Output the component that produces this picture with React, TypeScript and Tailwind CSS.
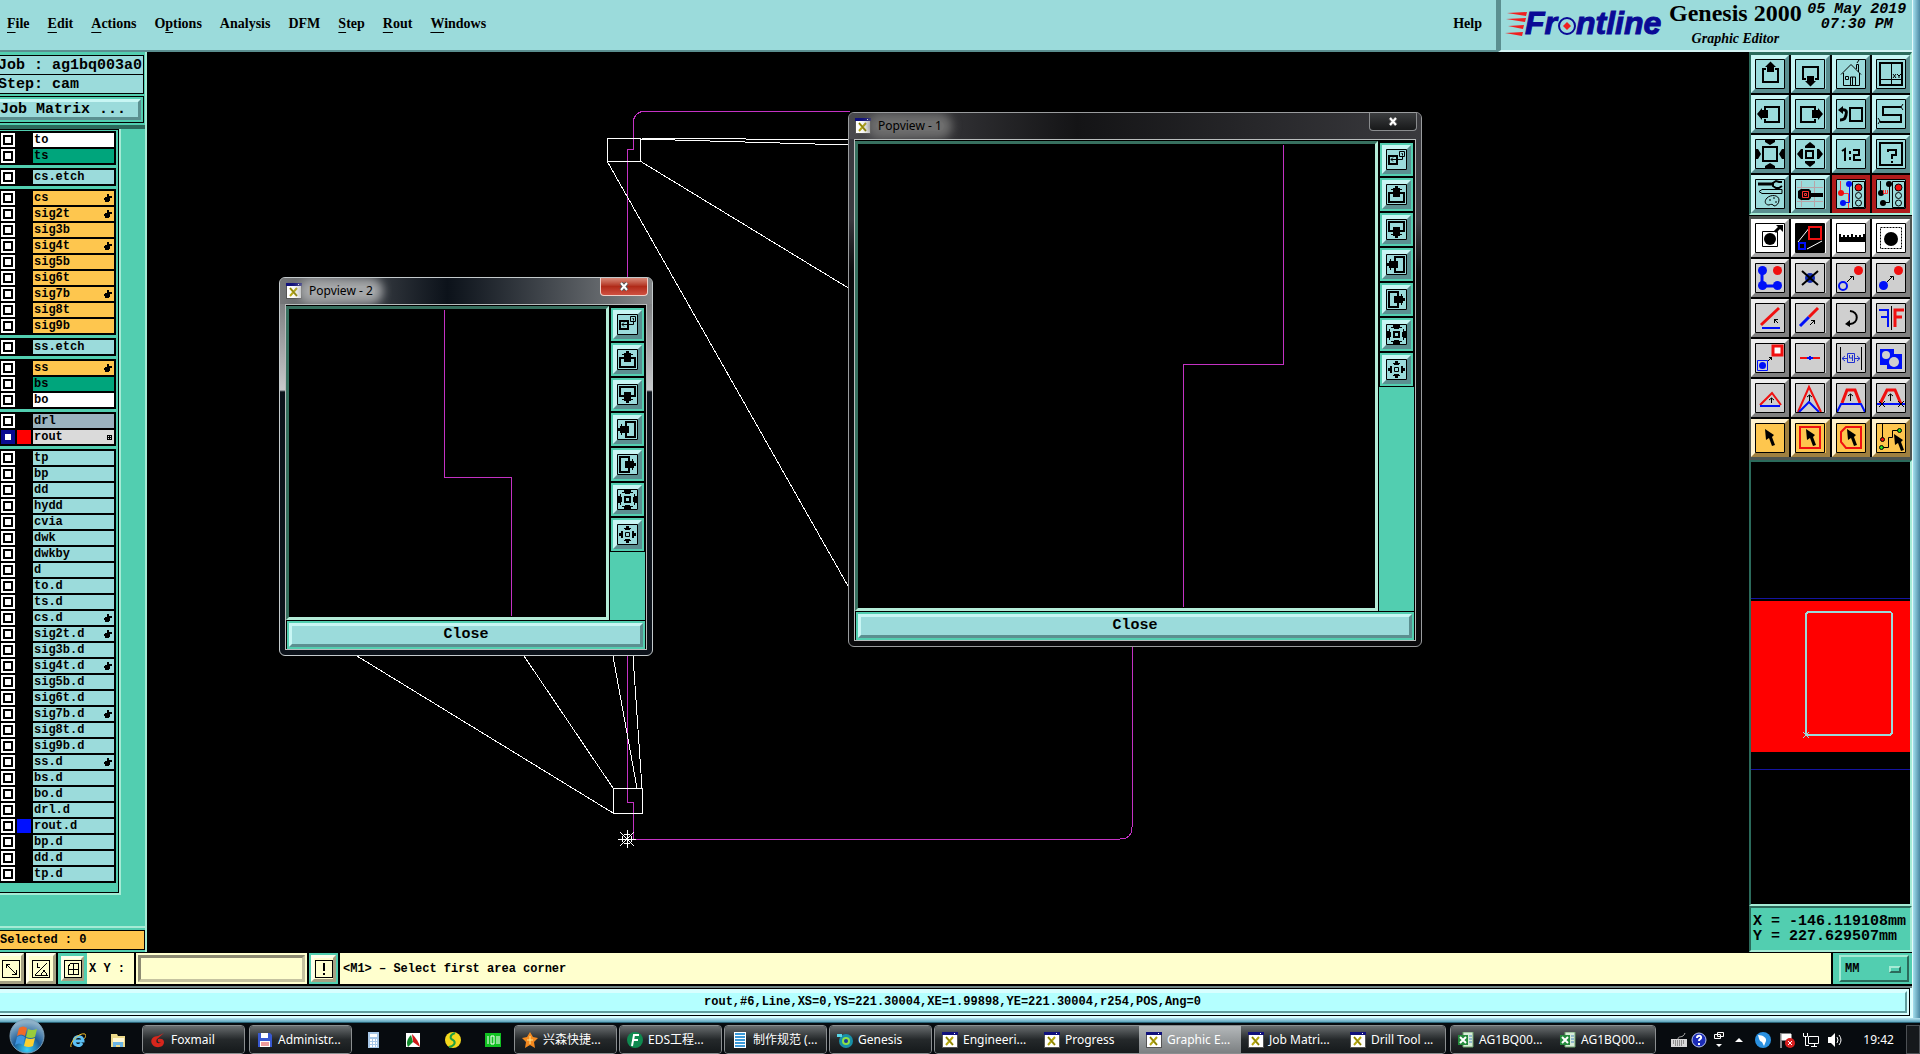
// App.tsx
// Genesis 2000 graphic editor: menu bar, layer list, drawing area with popviews,
// tool palettes, status rows and the desktop taskbar.

import type { ReactNode } from "react";
import clsx from "clsx";

const BLUE = "#0010f8";
const RED = "#f01010";

// ---------- bevels ----------

const BEVEL_AQUA =
  "border-[3px] border-t-[#c8f6f4] border-l-[#c8f6f4] border-r-[#5b8f90] border-b-[#5b8f90] bg-[#9bdbdb]";

// ---------- layer list ----------

interface Layer {
  name: string;
  fill: string;
  hand?: boolean;
  grid?: boolean;
  swatch?: string;
  active?: boolean;
}

const AQUA = "bg-[#9bdbdb]";
const ORANGE = "bg-[#fec64e]";
const GREEN = "bg-[#00a57c]";

const board = (names: string[], fill: string, hands: string[]): Layer[] =>
  names.map((name) => ({ name, fill, hand: hands.includes(name) }));

const layerGroups: Layer[][] = [
  [
    { name: "to", fill: "bg-white" },
    { name: "ts", fill: GREEN },
  ],
  [{ name: "cs.etch", fill: AQUA }],
  board(
    ["cs", "sig2t", "sig3b", "sig4t", "sig5b", "sig6t", "sig7b", "sig8t", "sig9b"],
    ORANGE,
    ["cs", "sig2t", "sig4t", "sig7b"]
  ),
  [{ name: "ss.etch", fill: AQUA }],
  [
    { name: "ss", fill: ORANGE, hand: true },
    { name: "bs", fill: GREEN },
    { name: "bo", fill: "bg-white" },
  ],
  [
    { name: "drl", fill: "bg-[#9bb3bf]" },
    { name: "rout", fill: "bg-[#dadada]", grid: true, swatch: "bg-[#ff0000]", active: true },
  ],
  [
    ...board(
      [
        "tp", "bp", "dd", "hydd", "cvia", "dwk", "dwkby", "d", "to.d", "ts.d", "cs.d", "sig2t.d",
        "sig3b.d", "sig4t.d", "sig5b.d", "sig6t.d", "sig7b.d", "sig8t.d", "sig9b.d", "ss.d",
        "bs.d", "bo.d", "drl.d",
      ],
      AQUA,
      ["cs.d", "sig2t.d", "sig4t.d", "sig7b.d", "ss.d"]
    ),
    { name: "rout.d", fill: AQUA, swatch: "bg-[#0010ff]" },
    ...board(["bp.d", "dd.d", "tp.d"], AQUA, []),
  ],
];

function LayerRow({ layer }: { layer: Layer }) {
  const id = `layer-${layer.name}`;
  return (
    <div className="flex h-[14px] gap-[2px]">
      <input
        id={id}
        type="checkbox"
        defaultChecked={layer.active}
        className={clsx(
          "size-[14px] shrink-0 appearance-none border-2 bg-white",
          layer.active
            ? "border-[#0a0a90] shadow-[inset_0_0_0_2px_#0a0a90]"
            : "border-white shadow-[inset_0_0_0_2px_black]"
        )}
      />
      <span className={clsx("w-[14px] shrink-0", layer.swatch)} />
      <label
        htmlFor={id}
        className={clsx("flex flex-1 items-center justify-between pr-[2px] pl-px text-xs leading-[14px]", layer.fill)}
      >
        {layer.name}
        {layer.hand && (
          <svg width="8" height="8" viewBox="0 0 8 8" shapeRendering="crispEdges">
            <path d="M3 0h2v2h3v2H6v3H5v1H1V6H0V4h1V3h2z" />
          </svg>
        )}
        {layer.grid && (
          <svg width="5" height="5" viewBox="0 0 5 5" shapeRendering="crispEdges">
            <path d="M0 0h5v5H0zM1 1v1h1V1zM3 1v1h1V1zM1 3v1h1V3zM3 3v1h1V3z" fillRule="evenodd" />
          </svg>
        )}
      </label>
    </div>
  );
}

function LayerPanel() {
  return (
    <aside className="flex w-[147px] shrink-0 flex-col border-r-2 border-[#a5ebd5] bg-[#52ceb0] font-bold">
      <div className="border-b-4 border-[#2b6a5b] pt-[3px]">
        <div className="mr-px border border-l-0 border-black bg-[#9bdbdb] text-[15px] leading-5 whitespace-nowrap">
          <div className="h-[18px]">
            <span className="-ml-[2px]">Job : ag1bq003a0</span>
          </div>
          <div className="h-[19px] border-t border-black">
            <span className="-ml-[2px]">Step: cam</span>
          </div>
        </div>
        <div className="mt-[2px] mr-px mb-[2px] border border-l-0 border-black p-[2px] pl-0">
          <button className={clsx(BEVEL_AQUA, "block h-[21px] w-full border-l-0 text-left text-[15px] leading-[15px]")}>
            Job Matrix ...
          </button>
        </div>
      </div>
      <div className="flex flex-1 flex-col items-start">
        <div className="w-[121px] border-r-2 border-b-2 border-[#a5ebd5]">
          <div className="flex flex-col gap-[3px] border-t border-r border-b border-black pt-px pr-[2px] pb-[9px]">
            {layerGroups.map((group, i) => (
              <div key={i} className="flex flex-col gap-[2px] bg-black py-[2px] pr-[2px] pl-px">
                {group.map((layer) => (
                  <LayerRow key={layer.name} layer={layer} />
                ))}
              </div>
            ))}
          </div>
        </div>
      </div>
      <div className="border-t-2 border-[#a5ebd5] pt-[2px] pb-[2px]">
        <div className="h-5 border border-l-0 border-black bg-[#fec64e] text-xs leading-[18px]">
          <span>Selected : 0</span>
        </div>
      </div>
    </aside>
  );
}

// ---------- tool icons, drawn on a 38px button grid ----------

const signalLight = (
  <>
    <path d="M20.5 6.5h12v26h-12z" fill="none" stroke="#000" />
    <circle cx="26.5" cy="12.5" r="3.5" fill={RED} stroke="#000" />
    <circle cx="26.5" cy="20.5" r="3" fill="none" stroke="#000" />
    <circle cx="26.5" cy="28" r="3" fill="none" stroke="#000" />
  </>
);

const icons: Record<string, ReactNode> = {
  panUp: (
    <>
      <path d="M15 14h-3v13h15V14h-3" fill="none" stroke="#000" strokeWidth="2" />
      <path d="M19.5 6.500l5.500 5.500h-2v5h-7v-5h-2z" />
    </>
  ),
  panDown: (
    <>
      <path d="M15 24h-3V12h15v12h-3" fill="none" stroke="#000" strokeWidth="2" />
      <path d="M19.5 31.500l5.500-5.500h-2v-5h-7v5h-2z" />
    </>
  ),
  home: (
    <path
      d="M9 19.5L19 9.500l10 10M11.500 18v12.500h16V18M18.500 30v-8h5v8M20.500 22v8M13.500 21.500h3v3h-3zM24.500 14V9.500h2V17M25 8l2-3"
      fill="none"
      stroke="#000"
    />
  ),
  split: (
    <>
      <path d="M8 8h22v22H8z" fill="none" stroke="#000" strokeWidth="2" />
      <path d="M19.500 8v22M8 24.500h22" stroke="#000" />
      <path d="M21 19l3 4M24 19l-3 4M25 19l2 2 2-2M27 21v2" stroke="#000" fill="none" />
    </>
  ),
  panLeft: (
    <>
      <path d="M14 15v-3h14v15H14v-3" fill="none" stroke="#000" strokeWidth="2" />
      <path d="M6 19l5-6v2h6v8h-6v2z" />
    </>
  ),
  panRight: (
    <>
      <path d="M24 15v-3H10v15h14v-3" fill="none" stroke="#000" strokeWidth="2" />
      <path d="M32 19l-5-6v2h-6v8h6v2z" />
    </>
  ),
  previous: (
    <>
      <path d="M18 13h12v13H18z" fill="none" stroke="#000" strokeWidth="2" />
      <path d="M9 15c6-1 6 2 5 5s-1 5-6 5" fill="none" stroke="#000" strokeWidth="3" />
      <path d="M6 15l5-4v8z" />
    </>
  ),
  serpentine: (
    <>
      <path d="M29 12H11v8h18v7H8" fill="none" stroke="#000" strokeWidth="2" />
      <path d="M31 9l-2 3 2 3M6 23l2 3-2 3" fill="none" stroke="#000" />
    </>
  ),
  zoomIn: (
    <>
      <path d="M12 12h14v14H12z" fill="none" stroke="#000" strokeWidth="2" />
      <path d="M14 5h10v2l-5 3-5-3zM14 33h10v-2l-5-3-5 3zM5 14v10h2l3-5-3-5zM33 14v10h-2l-3-5 3-5z" />
    </>
  ),
  zoomOut: (
    <>
      <path d="M15 16h7v7h-7z" fill="none" stroke="#000" strokeWidth="2" />
      <path d="M14 13h10v-2l-5-4-5 4zM14 26h10v2l-5 4-5-4zM12 14v10h-2l-4-5 4-5zM26 14v10h2l4-5-4-5z" />
    </>
  ),
  ratio: (
    <path
      d="M10 16l3-2v12M18 16v3M18 22v3M21 15h6v5h-5v5h7"
      fill="none"
      stroke="#000"
      strokeWidth="2"
    />
  ),
  help: (
    <>
      <path d="M8 8h22v22H8z" fill="none" stroke="#000" strokeWidth="2" />
      <path d="M16 17v-2h8v5h-4v4M20 26v2" fill="none" stroke="#000" strokeWidth="2" />
    </>
  ),
  tools: (
    <>
      <path d="M7 9h16" stroke="#000" strokeWidth="3" />
      <path d="M31 7h-3l-3-1-3 2v3l3 2h3l3-2" fill="none" stroke="#000" strokeWidth="2" />
      <path d="M8 16.500l3-2h20v4H11z" fill="none" stroke="#000" />
      <path d="M16 23c4-4 12-3 12 2 0 4-3 6-5 6-1-2-3-2-5-1-4 0-5-4-2-7z" fill="none" stroke="#000" />
      <path d="M18 25h2M22 23h2M24 27h2" stroke="#000" />
    </>
  ),
  probe: (
    <>
      <path d="M6 12.500h26M6 26.500h26M10.500 6v26M23.500 6v26" stroke="#b9a4a8" />
      <path d="M10 14h8l2 2v7l-2 2h-8l-3-2v-7z" />
      <path d="M20 20h12" stroke="#000" strokeWidth="4" />
      <path d="M11.500 16.500h6v6h-6zM13.500 18.500h2v2h-2z" fill="none" stroke="#f33" />
    </>
  ),
  signalColor: (
    <>
      <path d="M8.500 6v12M9 18.500h7.500V33" fill="none" stroke="#f33" />
      <path d="M17.500 8v19.500H11" fill="none" stroke={BLUE} />
      <circle cx="9" cy="18" r="3" fill={RED} />
      <circle cx="17" cy="9" r="3" fill={BLUE} />
      <circle cx="11" cy="28" r="3" fill={BLUE} />
      {signalLight}
    </>
  ),
  signalMono: (
    <>
      <path d="M8.500 6v12M17.500 9v18.500H11" fill="none" stroke="#000" />
      <circle cx="9" cy="18" r="3" />
      <circle cx="17" cy="9" r="3" />
      <circle cx="11" cy="28" r="3" />
      <path d="M11.500 15v3.500h4V15M13.500 15v4" fill="none" stroke="#f33" />
      {signalLight}
    </>
  ),
  padOut: (
    <>
      <path d="M11.500 12.500h15v15h-15z" fill="none" stroke="#000" />
      <circle cx="19" cy="20" r="6" />
      <path d="M24 13l6-6" stroke="#000" strokeWidth="3" />
      <path d="M25 6h7v7z" />
    </>
  ),
  popview: (
    <>
      <path d="M5 5h28v28H5z" />
      <path d="M7 23L19 8M16 30l15-8" stroke="#fff" />
      <path d="M18 8h12v12H18z" fill="none" stroke={RED} strokeWidth="2" />
      <path d="M8 24h6v6H8z" fill="none" stroke={BLUE} strokeWidth="2" />
    </>
  ),
  ruler: (
    <path d="M7 23V15h2v3h2v-2h2v2h2v-2h2v2h2v-3h2v3h2v-2h2v2h2v-2h2v2h2v-3h2v8z" />
  ),
  select: (
    <>
      <path d="M8.500 8.500h21v21h-21z" fill="none" stroke="#000" strokeDasharray="2 1" />
      <circle cx="19" cy="20" r="7" />
    </>
  ),
  chain: (
    <>
      <path d="M11 12v15h15" fill="none" stroke={BLUE} strokeWidth="3" />
      <circle cx="11.5" cy="11.5" r="4.5" fill={BLUE} />
      <circle cx="11.5" cy="26.5" r="4.5" fill={BLUE} />
      <circle cx="26.5" cy="26.5" r="4.5" fill={BLUE} />
      <circle cx="26.5" cy="11.5" r="4.5" fill={RED} />
    </>
  ),
  erase: (
    <>
      <circle cx="19" cy="19" r="5" fill="#1028b0" />
      <path d="M11 12l16 14M27 12L11 26" stroke="#000" strokeWidth="2" />
    </>
  ),
  moveOpen: (
    <>
      <circle cx="11" cy="27" r="4" fill="none" stroke={BLUE} strokeWidth="2" />
      <path d="M15 23l6-6M18 17.500h3.500V21" fill="none" stroke="#000" />
      <circle cx="26.5" cy="11.5" r="4.5" fill={RED} />
    </>
  ),
  moveSolid: (
    <>
      <circle cx="11.5" cy="26.5" r="4.5" fill={BLUE} />
      <path d="M15 23l6-6M18 17.500h3.500V21" fill="none" stroke="#000" />
      <circle cx="26.5" cy="11.5" r="4.5" fill={RED} />
    </>
  ),
  angle: (
    <>
      <path d="M10 26L28 9" stroke={RED} strokeWidth="3" />
      <path d="M11 29h18" stroke={BLUE} strokeWidth="2" />
      <path d="M27 24l-4-4M23.500 24v-3.500H27" fill="none" stroke="#000" />
    </>
  ),
  stretch: (
    <>
      <path d="M9 27l9-9" stroke={BLUE} strokeWidth="3" />
      <path d="M18 18l9-9" stroke={RED} strokeWidth="3" />
      <path d="M19 26l5-5M20 21.500h3.500V25" fill="none" stroke="#000" />
    </>
  ),
  rotate: (
    <>
      <path d="M18 12c9 1 9 12 0 13h-3" fill="none" stroke="#000" strokeWidth="2" />
      <path d="M13 25l5-4v7z" />
    </>
  ),
  mirror: (
    <>
      <path d="M19.500 7v24" stroke="#000" />
      <path d="M7 11h9v17M16 18H9" fill="none" stroke={BLUE} strokeWidth="2" />
      <path d="M32 11h-9v17M23 18h7" fill="none" stroke={RED} strokeWidth="3" />
    </>
  ),
  scalePad: (
    <>
      <path d="M22 7h9v9h-9z" fill="#fff" stroke={RED} strokeWidth="3" />
      <path d="M6.500 21.500h10v10h-10z" fill="none" stroke={BLUE} />
      <circle cx="11.5" cy="26.5" r="3.5" fill={BLUE} />
      <path d="M17 22l4-4M18 18.500h2.500V21" fill="none" stroke="#000" />
    </>
  ),
  breakLine: (
    <>
      <path d="M9 19h20" stroke={RED} strokeWidth="2" />
      <path d="M16 19h6" stroke={BLUE} strokeWidth="2" />
      <path d="M18 17h2v4h-2z" fill={BLUE} />
    </>
  ),
  spacing: (
    <>
      <path d="M8.500 8v23M29.500 8v23" stroke="#000" />
      <path d="M10 19.500h5M13 17l-3 2.500 3 2.500M23 19.500h5M25 17l3 2.500-3 2.500M15.500 14.500h7v9h-7zM17.500 16v3h3M20.500 16v6" fill="none" stroke="#2030d0" />
    </>
  ),
  merge: (
    <>
      <path d="M8 10h14v5h8v15H15v-4H8z" fill={BLUE} />
      <circle cx="14" cy="16" r="4" fill="#cfcfcf" />
      <circle cx="22" cy="23" r="5" fill="#cfcfcf" />
    </>
  ),
  triFlat: (
    <>
      <path d="M9 26l12-12 9 12" fill="none" stroke={RED} strokeWidth="2" />
      <path d="M9 27h20" stroke={BLUE} strokeWidth="2" />
      <path d="M20.500 24v-5M18 21l2.500-2 2.500 2" fill="none" stroke="#000" />
    </>
  ),
  triTall: (
    <>
      <path d="M7 33L18 8l12 25" fill="none" stroke={RED} strokeWidth="2" />
      <path d="M8 33l10-10 10 10" fill="none" stroke={BLUE} strokeWidth="2" />
      <path d="M18.500 22v-6M16 18l2.500-2 2.500 2" fill="none" stroke="#000" />
    </>
  ),
  arcTop: (
    <>
      <path d="M10 24l5-13h8l5 13" fill="none" stroke={RED} strokeWidth="3" />
      <path d="M5 33l4-8h20l4 8" fill="none" stroke={BLUE} strokeWidth="2" />
      <path d="M18.500 22v-7M16 17l2.500-2 2.500 2" fill="none" stroke="#000" />
    </>
  ),
  arcCut: (
    <>
      <path d="M8 25l7-14h8l6 14" fill="none" stroke={RED} strokeWidth="3" />
      <path d="M5 25h28" stroke={BLUE} strokeWidth="2" />
      <path d="M18.500 22v-7M16 17l2.500-2 2.500 2M7 22l6 6M13 22l-6 6M26 22l6 6M32 22l-6 6" fill="none" stroke="#000" />
    </>
  ),
  pointer: <path d="M14 10l9 6-2 2 3 8-3 1-3-8-3 2z" />,
  pointerBox: (
    <>
      <path d="M9 8h20v21H9z" fill="none" stroke={RED} strokeWidth="2" />
      <path d="M15 10l9 6-2 2 3 8-3 1-3-8-3 2z" />
    </>
  ),
  pointerPoly: (
    <>
      <path d="M14 8h15v21H14l-5-6V13z" fill="none" stroke={RED} strokeWidth="2" />
      <path d="M15 10l9 6-2 2 3 8-3 1-3-8-3 2z" />
    </>
  ),
  pointerNet: (
    <>
      <path d="M10.500 5v15M10 28.500h6.500v-10h4v-7H27" fill="none" stroke="#000" />
      <circle cx="10.5" cy="20.5" r="2" fill={RED} stroke="#000" />
      <circle cx="9.5" cy="28.5" r="2" fill="#20e020" stroke="#000" />
      <circle cx="27.5" cy="11.5" r="2" fill="#20e020" stroke="#000" />
      <path d="M22 15l9 6-2 2 3 8-3 1-3-8-3 2z" />
    </>
  ),
};

function ToolIcon({ name }: { name: string }) {
  return (
    <svg className="block size-[30px] shrink-0" viewBox="4 4 30 30" aria-hidden="true">
      {icons[name]}
      <path d="M4.5 4.5h29v29h-29z" fill="none" stroke="#000" />
    </svg>
  );
}

const viewTools = [
  "panUp", "panDown", "home", "split",
  "panLeft", "panRight", "previous", "serpentine",
  "zoomIn", "zoomOut", "ratio", "help",
  "tools", "probe", "signalColor", "signalMono",
];

const editTools = [
  "padOut", "popview", "ruler", "select",
  "chain", "erase", "moveOpen", "moveSolid",
  "angle", "stretch", "rotate", "mirror",
  "scalePad", "breakLine", "spacing", "merge",
  "triFlat", "triTall", "arcTop", "arcCut",
  "pointer", "pointerBox", "pointerPoly", "pointerNet",
];

const SKIN_AQUA = "border-t-[#c8f6f4] border-l-[#c8f6f4] border-r-[#5b8f90] border-b-[#5b8f90] bg-[#9bdbdb]";
const SKIN_RED = "border-[#b01c1c] bg-[#9bdbdb]";
const SKIN_WHITE = "border-t-white border-l-white border-r-[#a5a5a5] border-b-[#a5a5a5] bg-white";
const SKIN_GREY = "border-t-[#eeeeee] border-l-[#eeeeee] border-r-[#808080] border-b-[#808080] bg-[#cfcfcf]";
const SKIN_ORANGE = "border-t-[#fff2cf] border-l-[#fff2cf] border-r-[#a08040] border-b-[#a08040] bg-[#fec64e]";

function editSkin(index: number) {
  if (index < 4) return SKIN_WHITE;
  return index < 20 ? SKIN_GREY : SKIN_ORANGE;
}

function Palette({ tools, skin, className }: { tools: string[]; skin: (i: number) => string; className?: string }) {
  return (
    <div className={clsx("grid grid-cols-4 gap-[2px] border-2 border-t-[3px] bg-black", className)}>
      {tools.map((name, i) => (
        <button
          key={name}
          aria-label={name}
          className={clsx("flex h-[38px] items-center justify-center border-4", skin(i))}
        >
          <ToolIcon name={name} />
        </button>
      ))}
    </div>
  );
}

function ToolPanel() {
  return (
    <aside className="flex w-[163px] shrink-0 flex-col bg-black">
      <Palette
        tools={viewTools}
        skin={(i) => (i >= 14 ? SKIN_RED : SKIN_AQUA)}
        className="border-[#2b6a5b] border-r-[#a5ebd5] border-b-[#a5ebd5]"
      />
      <Palette tools={editTools} skin={editSkin} className="mt-px border-[#4e5450] border-b-[3px]" />
      <div className="flex flex-1 flex-col border-2 border-t-[#2b6a5b] border-r-[#a5ebd5] border-b-[#a5ebd5] border-l-[#2b6a5b]">
        <svg className="block h-[440px] w-full" viewBox="0 0 159 440" preserveAspectRatio="none" shapeRendering="crispEdges">
          <path d="M0 136h159M0 307h159" stroke="#1414a0" />
          <path d="M0 139h159v151H0z" fill="#ff0000" />
          <rect x="55" y="150" width="86" height="123" rx="3" fill="none" stroke="#9bdbdb" strokeWidth="2" />
          <path d="M52 270l6 6M58 270l-6 6" stroke="#9bdbdb" />
        </svg>
      </div>
      <div className="border-2 border-t-[#2b6a5b] border-r-[#a5ebd5] border-b-[#a5ebd5] border-l-[#2b6a5b] bg-[#52ceb0] py-[6px] pl-[2px] text-[15px] leading-[15px] font-bold whitespace-pre">
        <div>X = -146.119108mm</div>
        <div>Y = 227.629507mm</div>
      </div>
    </aside>
  );
}

// ---------- popview windows ----------

function XIcon({ className }: { className?: string }) {
  return (
    <svg className={clsx("shrink-0", className)} width="16" height="16" viewBox="0 0 16 16" aria-hidden="true">
      <path d="M0 0h16v16H0z" fill="#555" />
      <path d="M1 1h14v14H1z" fill="#fff" />
      <path d="M0 0h16v3H0z" fill="#10107c" />
      <path d="M12 1h1v1h-1z" fill="#fff" />
      <path d="M4 5l7 8M11 5l-7 8" stroke="#b5a812" strokeWidth="2" />
      <path d="M4 5l7 8" stroke="#77700c" strokeWidth="1" />
    </svg>
  );
}

// side column icons, 21px grid
const popviewIcons: Record<string, ReactNode> = {
  Dock: (
    <>
      <path d="M3 7h8v8H3z" fill="none" stroke="#000" strokeWidth="2" />
      <path d="M5 10.500h11.500v-3M7 8.500l-2 2 2 2M13.500 2.500h5v5h-5zM15.500 4.500h1v2" fill="none" stroke="#000" />
    </>
  ),
  Up: (
    <>
      <path d="M7 9H3v9h15V9h-4" fill="none" stroke="#000" strokeWidth="2" />
      <path d="M9 2h3v2h2v1h2v1h-2v7H7V6H5V5h2V4h2z" />
    </>
  ),
  Down: (
    <>
      <path d="M7 12H3V3h15v9h-4" fill="none" stroke="#000" strokeWidth="2" />
      <path d="M9 19h3v-2h2v-1h2v-1h-2V8H7v7H5v1h2v1h2z" />
    </>
  ),
  Left: (
    <>
      <path d="M9 7V3h9v15H9v-4" fill="none" stroke="#000" strokeWidth="2" />
      <path d="M1 9v3h2v2h1v2h1v-2h7V7H5V5H4v2H3v2z" />
    </>
  ),
  Right: (
    <>
      <path d="M12 7V3H3v15h9v-4" fill="none" stroke="#000" strokeWidth="2" />
      <path d="M19 9v3h-2v2h-1v2h-1v-2H8V7h7V5h1v2h1v2z" />
    </>
  ),
  "Zoom in": (
    <>
      <path d="M8 8h5v5H8z" fill="none" stroke="#000" strokeWidth="2" />
      <path d="M7 1h7v2h2v1h-3v1H8V4H5V3h2zM7 20h7v-2h2v-1h-3v-1H8v1H5v1h2zM1 7v7h2v2h1v-3h1V8H4V5H3v2zM20 7v7h-2v2h-1v-3h-1V8h1V5h1v2z" />
    </>
  ),
  "Zoom out": (
    <>
      <path d="M8.5 8.500h4v4h-4z" fill="none" stroke="#000" />
      <path d="M9 2h3v2h2v1h-1v1H8V5H7V4h2zM9 19h3v-2h2v-1h-1v-1H8v1H7v1h2zM2 9v3h2v2h2V7H4v2zM19 9v3h-2v2h-2V7h2v2z" />
    </>
  ),
};

interface PopviewProps {
  title: string;
  place: string;
  frame: string;
  bar: string;
  glow: string;
  closeSkin: string;
  children: ReactNode;
}

function Popview({ title, place, frame, bar, glow, closeSkin, children }: PopviewProps) {
  return (
    <section className={clsx("absolute flex flex-col overflow-hidden rounded-md border px-[5px] pb-[5px]", place, frame)}>
      <header className={clsx("-mx-[5px] flex h-[26px] shrink-0 items-start justify-between pr-1 pl-[6px]", bar)}>
        <h2 className="flex h-[26px] items-center gap-[5px] font-['Noto_Sans','Open_Sans',sans-serif] text-xs text-black">
          <XIcon />
          <span className={clsx("rounded-full px-[2px] leading-[10px]", glow)}>{title}</span>
        </h2>
        <button
          aria-label={`Close ${title}`}
          className={clsx("flex h-[18px] w-[48px] items-center justify-center rounded-b border border-t-0", closeSkin)}
        >
          <svg width="12" height="10" viewBox="0 0 12 10">
            <path d="M3 1l6 7M9 1L3 8" stroke="#555" strokeWidth="4" />
            <path d="M3 1l6 7M9 1L3 8" stroke="#fff" strokeWidth="2" />
          </svg>
        </button>
      </header>
      <div className="flex flex-1 flex-col border border-[#b8bcbc] bg-black">
        <div className="flex flex-1 pt-px pr-px">
          <div className="flex-1 border-[3px] border-t-[#37705f] border-r-[#b4ecd8] border-b-[#b4ecd8] border-l-[#37705f]">
            {children}
          </div>
          <div className="ml-px flex w-[35px] flex-col bg-[#52ceb0]">
            {Object.entries(popviewIcons).map(([name, drawing]) => (
              <div key={name} className="border border-t-2 border-b-0 border-black bg-[#52ceb0] p-[2px]">
                <button
                  aria-label={name}
                  className={clsx("flex size-[29px] items-center justify-center border-4", SKIN_AQUA)}
                >
                  <svg className="block shrink-0" width="21" height="21" viewBox="0 0 21 21" aria-hidden="true">
                    {drawing}
                    <path d="M.5.5h20v20H.5z" fill="none" stroke="#000" />
                  </svg>
                </button>
              </div>
            ))}
            <div className="flex-1 border-t border-black" />
          </div>
        </div>
        <div className="mx-px mt-px border-2 border-[#52ceb0]">
          <button className={clsx(BEVEL_AQUA, "flex h-6 w-full items-center justify-center text-[15px] font-bold")}>Close</button>
        </div>
      </div>
    </section>
  );
}

function Canvas() {
  return (
    <main className="relative flex-1 overflow-hidden bg-black">
      <svg className="absolute inset-0 h-full w-full" shapeRendering="crispEdges" fill="none">
        <g transform="translate(-147 -52)">
          <path d="M850 111H647q-14 0-14 14v24h-6v653h6v37h487q12 0 12-12V640" stroke="#c432c4" />
          <g stroke="#fff">
            <path d="M607 138h33v23h-33zM613 788h29v25h-29z" />
            <path d="M640 138l210 2M640 139l210 6M640 161l210 128M607 161l241 425" />
            <path d="M357 656l256 157M524 656l89 132M613 656l24 132M633 656l9 132" />
            <circle cx="627" cy="839" r="5" />
            <path d="M618 839h18M627 830v18M620 832l14 14M634 832l-14 14" />
          </g>
        </g>
      </svg>

      <Popview
        title="Popview - 1"
        place="top-[60px] left-[701px] h-[535px] w-[574px]"
        frame="border-[#9a9c9e] bg-linear-to-b from-[#3a3a40] from-20% to-[#0a0a0c] to-30%"
        bar="bg-linear-to-r from-[#4a4a4e] via-[#141416] via-40% to-[#3a3a3e]"
        glow="bg-[#6e6e6e] shadow-[0_0_10px_8px_#6e6e6e]"
        closeSkin="border-[#8a8c8e] bg-linear-to-b from-[#3c3e40] to-[#18191a]"
      >
        <svg className="block" width="517" height="464" viewBox="0 0 517 464" shapeRendering="crispEdges">
          <path d="M425 1v219H325v243" fill="none" stroke="#c432c4" />
        </svg>
      </Popview>

      <Popview
        title="Popview - 2"
        place="top-[225px] left-[132px] h-[379px] w-[374px]"
        frame="border-[#c4cacc] bg-linear-to-b from-[#6a6c6e] via-[#c8cacc] via-[112px] to-[#0c121a] to-[114px]"
        bar="bg-linear-to-r from-[#76787a] via-[#0c121a] via-45% to-[#85888a]"
        glow="bg-[#a4a6a8] shadow-[0_0_10px_8px_#a4a6a8]"
        closeSkin="border-[#f0d0c8] bg-linear-to-b from-[#d88878] via-[#b02a18] to-[#d05040]"
      >
        <svg className="block" width="317" height="308" viewBox="0 0 317 308" shapeRendering="crispEdges">
          <path d="M155 1v167h67v139" fill="none" stroke="#c432c4" />
        </svg>
      </Popview>
    </main>
  );
}

// ---------- menu bar and banner ----------

const menus: [string, string, string][] = [
  ["", "F", "ile"],
  ["", "E", "dit"],
  ["", "A", "ctions"],
  ["O", "p", "tions"],
  ["Analysis", "", ""],
  ["DFM", "", ""],
  ["", "S", "tep"],
  ["", "R", "out"],
  ["", "W", "indows"],
];

function MenuBar() {
  return (
    <header className="flex h-[52px] bg-[#9bdbdb] font-['Liberation_Serif',serif]">
      <nav className="flex flex-1 items-center gap-[18px] border-r-2 border-b-2 border-[#5b8f90] pr-[14px] pb-[2px] pl-[7px] text-sm font-bold">
        {menus.map(([before, key, after]) => (
          <button key={before + key + after}>
            {before}
            {key && <span className="underline underline-offset-4">{key}</span>}
            {after}
          </button>
        ))}
        <button className="ml-auto">Help</button>
      </nav>
      <div className="flex w-[414px] shrink-0 border-b-2 border-l-[3px] border-b-[#d4f4f4] border-l-[#5b8f90] pl-1">
        <svg className="mt-1 h-11 w-[164px] shrink-0" viewBox="0 0 164 44">
          <path d="M2 9l20-1-1 4zM1 15l20-1-1 4zM3 22l16-1-1 4zM0 29l18-1-1 4z" fill="#f02020" />
          <g
            fill="#0a0a96"
            stroke="#0a0a96"
            fontFamily="Liberation Sans, Arial, sans-serif"
            fontWeight="700"
            fontStyle="italic"
            fontSize="32"
          >
            <text x="20" y="30">Fr</text>
            <text x="71" y="30">ntline</text>
          </g>
          <circle cx="62" cy="22" r="8" fill="none" stroke="#0a0a96" strokeWidth="2" />
          <path d="M62 18l4 4-4 4-4-4z" fill="#f02020" />
        </svg>
        <div className="flex flex-col items-center font-bold whitespace-nowrap">
          <h1 className="text-2xl leading-[26px]">Genesis 2000</h1>
          <p className="text-sm leading-[25px] italic">Graphic Editor</p>
        </div>
        <time className="flex flex-1 flex-col items-center pt-[2px] font-['Liberation_Mono',monospace] text-[15px] leading-[15px] font-bold whitespace-nowrap italic">
          <span>05 May 2019</span>
          <span>07:30 PM</span>
        </time>
      </div>
    </header>
  );
}

// ---------- command row and status row ----------

function SquareIcon({ children }: { children: ReactNode }) {
  return (
    <svg className="block shrink-0" width="18" height="18" viewBox="0 0 18 18" fill="none" stroke="#000" shapeRendering="crispEdges">
      <path d="M.5.5h17v17H.5z" />
      {children}
    </svg>
  );
}

const CREAM_BEVEL =
  "flex h-full items-center justify-center border-[3px] border-t-[#ffffea] border-l-[#ffffea] border-r-[#a5a283] border-b-[#a5a283] bg-[#ffffce]";

function CommandRow() {
  return (
    <div className="flex h-[34px] items-stretch gap-[2px] border-t border-b-2 border-black bg-black text-xs font-bold">
      <button aria-label="Diagonal" className={clsx(CREAM_BEVEL, "w-6 border-l-0")}>
        <SquareIcon>
          <path d="M4 4l10 10M4 8V4h4M14 10v4h-4" />
        </SquareIcon>
      </button>
      <button aria-label="Angle lock" className={clsx(CREAM_BEVEL, "w-[30px]")}>
        <SquareIcon>
          <path d="M3 15L15 3M5 3v4h3M9 15l3-5 3 5zM3 15h6" />
        </SquareIcon>
      </button>
      <div className="w-[29px] bg-[#52ceb0] p-[3px]">
        <button aria-label="Grid" className={clsx(CREAM_BEVEL, "w-full")}>
          <SquareIcon>
            <path d="M4 14V7l3-4h7v11zM9 3v11M4 9h10" />
          </SquareIcon>
        </button>
      </div>
      <label htmlFor="xy" className="-ml-[2px] flex w-[47px] items-center bg-[#ffffce] pl-[2px] whitespace-pre">
        X Y :
      </label>
      <div className="w-[171px] bg-[#ffffce] p-[2px]">
        <input
          id="xy"
          className="h-full w-full border-[3px] border-t-[#8d8b72] border-r-[#c5c3a0] border-b-[#c5c3a0] border-l-[#8d8b72] bg-[#ffffce] px-1 outline-none"
        />
      </div>
      <div className="w-[29px] bg-[#52ceb0] p-[2px]">
        <button aria-label="Alert" className={clsx(CREAM_BEVEL, "w-full")}>
          <SquareIcon>
            <path d="M9 3v8M9 13v2" strokeWidth="2" />
          </SquareIcon>
        </button>
      </div>
      <output className="flex flex-1 items-center bg-[#ffffce] pl-[3px]">&lt;M1&gt; – Select first area corner</output>
      <div className="w-[79px] bg-[#52ceb0] py-[2px] pr-[3px] pl-[6px]">
        <div className="relative h-full border-2 border-t-[#a5ebd5] border-r-[#2b6a5b] border-b-[#2b6a5b] border-l-[#a5ebd5]">
          <select aria-label="Units" className="h-full w-full appearance-none bg-transparent pl-1 font-bold outline-none">
            <option>MM</option>
            <option>INCH</option>
          </select>
          <span className="pointer-events-none absolute top-[9px] right-[6px] h-[7px] w-3 border-2 border-t-[#a5ebd5] border-r-[#2b6a5b] border-b-[#2b6a5b] border-l-[#a5ebd5]" />
        </div>
      </div>
    </div>
  );
}

function StatusRow() {
  return (
    <div className="border-t-2 border-[#6f8585] bg-[#d8ffff] pb-[2px]">
      <div className="mr-[2px] border border-l-0 border-black p-[2px] pl-0">
        <div className="flex h-[22px] items-center justify-center border-t-2 border-r-2 border-b-2 border-t-[#d8ffff] border-r-[#5f9c9c] border-b-[#5f9c9c] bg-[#b4ffff] text-xs font-bold">
          rout,#6,Line,XS=0,YS=221.30004,XE=1.99898,YE=221.30004,r254,POS,Ang=0
        </div>
      </div>
    </div>
  );
}

// ---------- taskbar ----------

const glyphs: Record<string, ReactNode> = {
  ie: (
    <>
      <path d="M4 9h9c0-6-9-6-9 0 0 5 6 6 8 2" fill="none" stroke="#5cc0f4" strokeWidth="3" />
      <path d="M1 15C-1 11 9 0 15 2c2 2-1 5-1 5" fill="none" stroke="#f6c22c" />
    </>
  ),
  folder: (
    <>
      <path d="M1 2h6l1 2h7v11H1z" fill="#ecd98a" />
      <path d="M3 6h11v4H3z" fill="#fff8d4" />
      <path d="M3 10h10v5h-3v-2H6v2H3z" fill="#6cb6e6" />
    </>
  ),
  fox: <path d="M14 1L8 4C2 4 0 9 2 12c3 5 12 4 12-2 0-3-3-4-6-3-1 3 1 4 3 3-3 3-6 0-4-3z" fill="#d8261c" />,
  floppy: (
    <>
      <path d="M1 1h12l2 2v12H1z" fill="#3858d0" />
      <path d="M4 1h7v5H4zM3 9h10v6H3z" fill="#fff" />
      <path d="M4 11h8M4 13h8" stroke="#e03838" />
    </>
  ),
  calc: (
    <>
      <path d="M3 0h11v16H3z" fill="#a8c8e8" />
      <path d="M5 2h7v3H5z" fill="#fff" />
      <path d="M5 8h7M5 11h7M5 14h7" stroke="#fff" strokeWidth="2" strokeDasharray="2 1" />
    </>
  ),
  leaf: (
    <>
      <path d="M1 1h14v14H1z" fill="#fff" />
      <path d="M7 2c4 4 7 8 8 13L8 10z" fill="#d01818" />
      <path d="M6 3C2 7 1 11 3 15l5-5z" fill="#118a2c" />
    </>
  ),
  sogou: (
    <>
      <circle cx="8" cy="8" r="8" fill="#f4d81c" />
      <path d="M10 1c-6 2-5 6-2 7 3 2 2 6-4 7" fill="none" stroke="#20a040" strokeWidth="2" />
    </>
  ),
  iqiyi: (
    <>
      <path d="M0 1h16v14H0z" fill="#10c020" />
      <path d="M3 4v8M6 4h3v8H6zM12 4v8M14 4v8" fill="none" stroke="#fff" />
    </>
  ),
  star: (
    <>
      <path d="M8 0l3 5 5 1-4 4 1 6-5-3-5 3 1-6-4-4 5-1z" fill="#f48a20" />
      <path d="M8 4v8M5 8h6" stroke="#ffe890" />
    </>
  ),
  eds: (
    <>
      <circle cx="8" cy="8" r="8" fill="#0f8a50" />
      <path d="M12 3H7L5 14M6 8h5" fill="none" stroke="#fff" strokeWidth="2" />
    </>
  ),
  doc: (
    <>
      <path d="M2 0h12v16H2z" fill="#fff" />
      <path d="M3 2h10M3 5h10M3 8h10M3 11h10M3 14h10" stroke="#3c9ad8" strokeWidth="2" />
    </>
  ),
  genesis: (
    <>
      <circle cx="9" cy="9" r="7" fill="#1890a8" />
      <circle cx="9" cy="9" r="4" fill="#8ce048" />
      <circle cx="9" cy="9" r="2" fill="#1838a0" />
      <path d="M0 2h5v3H0z" fill="#58d8e8" />
    </>
  ),
  excel: (
    <>
      <path d="M5 0h10v15H5z" fill="#d8ecd8" stroke="#6aa06a" />
      <path d="M0 3h10v10H0z" fill="#258a3c" />
      <path d="M2 5l6 6M8 5l-6 6" stroke="#fff" strokeWidth="2" />
      <path d="M11 4h3M11 7h3M11 10h3" stroke="#4c88c0" />
    </>
  ),
  keyboard: (
    <>
      <path d="M0 7h16v8H0z" fill="#d8d8d8" />
      <path d="M2 9h12M2 11h12M4 13h8" stroke="#444" strokeDasharray="1 1" />
      <path d="M7 7c0-4 5 0 7-6" fill="none" stroke="#aaa" />
    </>
  ),
  question: (
    <>
      <circle cx="8" cy="8" r="7" fill="#1c2cb8" stroke="#b8c4f0" />
      <path d="M6 6c0-3 5-3 4 0 0 1-2 1-2 3M8 11v2" fill="none" stroke="#fff" strokeWidth="2" />
    </>
  ),
  restore: (
    <>
      <path d="M6.5.5h6v4h-6zM3.500 2.500h6v4h-6z" fill="#111" stroke="#fff" />
      <path d="M5 12h6l-3 3z" fill="#fff" />
    </>
  ),
  up: <path d="M8 6l4 4H4z" fill="#fff" />,
  bird: (
    <>
      <circle cx="8" cy="8" r="8" fill="#2a90e0" />
      <path d="M3 3c5 0 9 3 8 6l-2 5-2-4C4 9 4 6 3 3z" fill="#fff" />
    </>
  ),
  flag: (
    <>
      <path d="M2 1v15M3 2h9v6H3z" fill="#fff" stroke="#fff" />
      <circle cx="11" cy="11" r="5" fill="#d82020" />
      <path d="M9 9l4 4M13 9l-4 4" stroke="#fff" />
    </>
  ),
  network: (
    <>
      <path d="M5.500 4.500h10v7h-10zM8 14.500h6M11.500 12v3" fill="none" stroke="#fff" />
      <path d="M.5 1v3.500h4V1M2.500 5v8.500H6" fill="none" stroke="#fff" />
    </>
  ),
  speaker: (
    <>
      <path d="M1 5h3l4-4v14l-4-4H1z" fill="#fff" />
      <path d="M10 5q2 3 0 6M12 3q4 5 0 10" fill="none" stroke="#fff" />
    </>
  ),
};

function Glyph({ name }: { name: string }) {
  if (name === "x11") return <XIcon />;
  return (
    <svg className="shrink-0" width="16" height="16" viewBox="0 0 16 16" aria-hidden="true">
      {glyphs[name]}
    </svg>
  );
}

type Task = [icon: string, label: string, active?: boolean];

function Pinned({ names }: { names: string[] }) {
  return (
    <>
      {names.map((name) => (
        <button key={name} aria-label={name} className="flex w-10 shrink-0 items-center justify-center">
          <Glyph name={name} />
        </button>
      ))}
    </>
  );
}

function TaskGroup({ tasks }: { tasks: Task[] }) {
  return (
    <div className="mx-px flex h-[29px] shrink-0 overflow-hidden rounded-sm border border-[#8a8e90]">
      {tasks.map(([icon, label, active], i) => (
        <button
          key={i}
          className={clsx(
            "flex items-center gap-[5px] bg-linear-to-b pl-[7px] whitespace-nowrap",
            tasks.length > 1 ? "w-[102px]" : "w-[101px]",
            active ? "from-[#b4b8ba] to-[#7c8082]" : "from-[#6a6e70] via-[#25292b] via-50% to-[#15191b]"
          )}
        >
          <Glyph name={icon} />
          {label}
        </button>
      ))}
    </div>
  );
}

function Taskbar() {
  return (
    <footer className="flex h-[31px] items-center bg-[#070b0f] pt-[2px] font-['Noto_Sans','Noto_Sans_CJK_SC',sans-serif] text-xs text-white">
      <button aria-label="Start" className="relative h-full w-[58px] shrink-0">
        <svg className="absolute bottom-0 left-[9px]" width="36" height="36" viewBox="0 0 36 36">
          <defs>
            <radialGradient id="orb" cx="50%" cy="90%" r="80%">
              <stop offset="0" stopColor="#38d0f8" />
              <stop offset="50%" stopColor="#1c5c98" />
              <stop offset="1" stopColor="#8cb0c8" />
            </radialGradient>
          </defs>
          <circle cx="18" cy="18" r="17" fill="url(#orb)" stroke="#7ca0b8" />
          <path d="M10 10q4-3 8 0l-2 8q-4-3-8 0z" fill="#f06a28" />
          <path d="M19 11q4 2 9 0l-2 8q-4 2-9 0z" fill="#98cc3c" />
          <path d="M8 19q4-3 8 0l-2 8q-4-3-8 0z" fill="#3c94e0" />
          <path d="M17 20q4 2 9 0l-2 8q-4 2-9 0z" fill="#fcd030" />
        </svg>
      </button>
      <Pinned names={["ie", "folder"]} />
      <div className="ml-[3px] flex gap-[2px]">
        <TaskGroup tasks={[["fox", "Foxmail"]]} />
        <TaskGroup tasks={[["floppy", "Administr..."]]} />
      </div>
      <Pinned names={["calc", "leaf", "sogou", "iqiyi"]} />
      <TaskGroup tasks={[["star", "兴森快捷..."]]} />
      <TaskGroup tasks={[["eds", "EDS工程..."]]} />
      <TaskGroup tasks={[["doc", "制作规范 (..."]]} />
      <TaskGroup tasks={[["genesis", "Genesis"]]} />
      <div className="flex gap-[2px]">
        <TaskGroup
          tasks={[
            ["x11", "Engineeri..."],
            ["x11", "Progress"],
            ["x11", "Graphic E...", true],
            ["x11", "Job Matri..."],
            ["x11", "Drill Tool ..."],
          ]}
        />
        <TaskGroup
          tasks={[
            ["excel", "AG1BQ00..."],
            ["excel", "AG1BQ00..."],
          ]}
        />
      </div>
      <div className="ml-auto flex items-center gap-2">
        <div className="flex items-center gap-1">
          <Glyph name="keyboard" />
          <Glyph name="question" />
          <Glyph name="restore" />
          <Glyph name="up" />
        </div>
        <Glyph name="bird" />
        <Glyph name="flag" />
        <Glyph name="network" />
        <Glyph name="speaker" />
        <time className="mx-3">19:42</time>
      </div>
      <button aria-label="Show desktop" className="h-full w-[14px] border border-[#4c5054] bg-[#16191c]" />
    </footer>
  );
}

export default function App() {
  return (
    <div className="flex min-h-screen flex-col bg-black font-['Liberation_Mono',monospace] text-black">
      <div className="flex flex-1">
        <div className="flex min-w-0 flex-1 flex-col">
          <MenuBar />
          <div className="flex flex-1">
            <LayerPanel />
            <Canvas />
            <ToolPanel />
          </div>
          <CommandRow />
          <StatusRow />
        </div>
        <div className="w-2 shrink-0 border-l border-[#e4fafc] bg-linear-to-r from-[#a4e0ee] to-[#4c8aa4]" />
      </div>
      <div className="h-[5px] border-b border-[#2c6478] bg-linear-to-b from-[#b8e4f0] to-[#5ca4bc]" />
      <Taskbar />
    </div>
  );
}
